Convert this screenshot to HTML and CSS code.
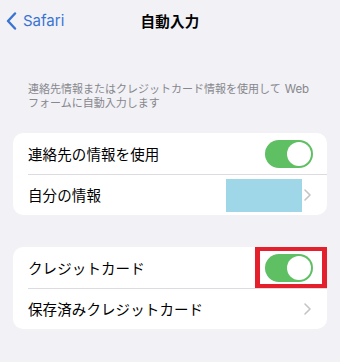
FILE: index.html
```html
<!DOCTYPE html>
<html lang="ja">
<head>
<meta charset="utf-8">
<link rel="stylesheet" href="styles.css">
</head>
<body>
<div class="screen">
  <header class="nav">
    <div class="back">
      <svg class="back-chev" width="11" height="18" viewBox="0 0 11 18"><path d="M9 1.5 L2 9 L9 16.5" fill="none" stroke="#3a74d2" stroke-width="2.4" stroke-linecap="round" stroke-linejoin="round"/></svg>
      <span class="back-label">Safari</span>
    </div>
    <h1 class="title">自動入力</h1>
  </header>

  <div class="desc">
    <span class="desc-line">連絡先情報またはクレジットカード情報を使用して<span class="latin">Web</span></span>
    <span class="desc-line">フォームに自動入力します</span>
  </div>

  <section class="card">
    <div class="row">
      <span class="label">連絡先の情報を使用</span>
      <span class="toggle"><span class="knob"></span></span>
    </div>
    <div class="row">
      <span class="label">自分の情報</span>
      <span class="redact"></span>
      <svg class="chev" width="7" height="12" viewBox="0 0 7 12"><path d="M1 1 L6 6 L1 11" fill="none" stroke="#c4c4c8" stroke-width="1.6" stroke-linecap="round" stroke-linejoin="round"/></svg>
    </div>
  </section>

  <section class="card card-second">
    <div class="row">
      <span class="label">クレジットカード</span>
      <span class="toggle"><span class="knob"></span></span>
      <span class="highlight"></span>
    </div>
    <div class="row">
      <span class="label">保存済みクレジットカード</span>
      <svg class="chev" width="7" height="12" viewBox="0 0 7 12"><path d="M1 1 L6 6 L1 11" fill="none" stroke="#c4c4c8" stroke-width="1.6" stroke-linecap="round" stroke-linejoin="round"/></svg>
    </div>
  </section>
</div>
</body>
</html>
```

FILE: styles.css
```css
html, body {
  margin: 0;
  padding: 0;
  background: #f1f1f6;
}
body {
  font-family: "Noto Sans CJK JP", "Noto Sans", sans-serif;
  color: #000;
  width: 340px;
  height: 362px;
  overflow: hidden;
}
.screen {
  display: flex;
  flex-direction: column;
}
.nav {
  position: relative;
  height: 42px;
  display: flex;
  align-items: center;
  justify-content: center;
}
.back {
  position: absolute;
  left: 6px;
  top: 12px;
  display: flex;
  align-items: center;
  gap: 6px;
}
.back-label {
  font-family: "Inter", "Noto Sans", sans-serif;
  font-size: 15px;
  color: #3a74d2;
  line-height: 18px;
}
.title {
  margin: 0;
  font-size: 14.5px;
  font-weight: 700;
  line-height: 18px;
  letter-spacing: 0.2px;
}
.desc {
  margin: 39px 0 0 28px;
  display: flex;
  flex-direction: column;
  font-size: 11px;
  color: #87878c;
}
.desc-line {
  display: block;
  height: 14px;
  line-height: 14px;
  white-space: nowrap;
}
.latin {
  font-family: "Inter", "Noto Sans", sans-serif;
  font-size: 11.5px;
  margin-left: 4px;
}
.card {
  margin: 24px 13px 0;
  background: #fff;
  border-radius: 10px;
  padding-left: 15px;
}
.card-second {
  margin-top: 32px;
}
.row {
  position: relative;
  height: 41px;
  display: flex;
  align-items: center;
  padding-right: 14px;
}
.row + .row {
  border-top: 1px solid #dcdce0;
  height: 40px;
}
.label {
  flex: 1;
  font-size: 14.5px;
  line-height: 20px;
  letter-spacing: 0.1px;
}
.toggle {
  width: 48px;
  height: 28px;
  border-radius: 14px;
  background: #5fbf63;
  display: flex;
  align-items: center;
  justify-content: flex-end;
  padding-right: 2px;
  box-sizing: border-box;
}
.knob {
  width: 24px;
  height: 24px;
  border-radius: 50%;
  background: #fff;
}
.redact {
  width: 76px;
  height: 33px;
  background: #9fd7e9;
  margin-right: 2px;
}
.chev {
  margin-right: 2px;
}
.highlight {
  position: absolute;
  right: 0;
  top: 0;
  width: 72px;
  height: 41px;
  box-sizing: border-box;
  border: 5px solid #e3202b;
  border-top-width: 4px;
  border-bottom-width: 4px;
}
```
